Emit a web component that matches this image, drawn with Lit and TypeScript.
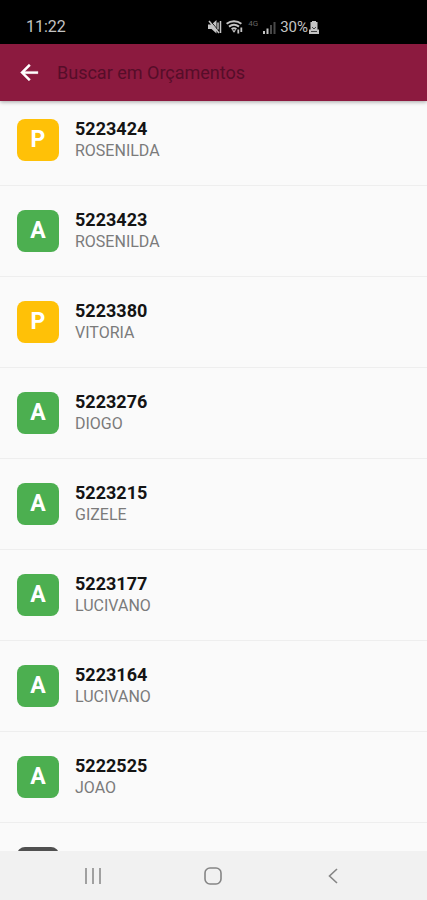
import { LitElement, html, css, nothing } from "lit";
import { customElement, property } from "lit/decorators.js";

type Quote = { status: string; number: string; client: string };

const QUOTES: Quote[] = [
  { status: "P", number: "5223424", client: "ROSENILDA" },
  { status: "A", number: "5223423", client: "ROSENILDA" },
  { status: "P", number: "5223380", client: "VITORIA" },
  { status: "A", number: "5223276", client: "DIOGO" },
  { status: "A", number: "5223215", client: "GIZELE" },
  { status: "A", number: "5223177", client: "LUCIVANO" },
  { status: "A", number: "5223164", client: "LUCIVANO" },
  { status: "A", number: "5222525", client: "JOAO" },
  { status: "", number: "", client: "" },
];

@customElement("status-bar")
export class StatusBar extends LitElement {
  static styles = css`
    :host {
      display: flex;
      align-items: flex-end;
      box-sizing: border-box;
      height: 44px;
      padding: 0 108px 7px 26px;
      background: #000;
      color: #c4c4c4;
      font-size: 15px;
      line-height: 20px;
    }
    .time {
      flex: 1;
      font-size: 16px;
    }
    .icons {
      display: flex;
      align-items: center;
      height: 20px;
    }
    .network {
      width: 11px;
      margin: 0 4px 6px 5px;
      color: #666;
      font-size: 8px;
      line-height: 8px;
    }
    .wifi {
      margin-left: 4px;
    }
    .level {
      margin: 0 1px 0 4px;
    }
    svg {
      display: block;
    }
  `;

  render() {
    return html`
      <span class="time">11:22</span>
      <div class="icons">
        <svg width="14" height="14" viewBox="0 0 14 14" fill="none" stroke="currentColor">
          <path d="M0 4.500h3.500l5-4.500v13.500l-5-4.500H0z" fill="currentColor" stroke="none" />
          <path d="M2.500 1l9 11" stroke="#000" stroke-width="1" />
          <path d="M1 1l10 12" stroke-width="1.500" />
          <path d="M10 2.500v7M12.500 1v12" stroke-width="1.500" />
        </svg>
        <svg class="wifi" width="17" height="14" viewBox="0 0 17 14" fill="none" stroke="currentColor">
          <path d="M.600 3.800C5 .4 11 .4 15.400 3.800M3 6.600c3.200-2.400 6.800-2.400 10 0M5.600 9.200c1.600-1.200 3.200-1.200 4.800 0" stroke-width="2" />
          <path d="M6 10.200h4l-2 2.600z" fill="currentColor" stroke="none" />
          <path d="M12.300 9.500V13.500M15.300 7.500V12" stroke-width="1.800" />
        </svg>
        <span class="network">4G</span>
        <svg width="13" height="13" viewBox="0 0 13 13">
          <path d="M0 10h2v3H0zM3.500 7.500h2V13h-2z" fill="currentColor" />
          <path d="M7 4h2v9H7zM10.500 1h2v12h-2z" fill="#494949" />
        </svg>
        <span class="level">30%</span>
        <svg width="10" height="13" viewBox="0 0 10 13" fill="currentColor">
          <path d="M3 0h4v1h1.500v7.500H10V13H0V8.500h1.500V1H3z" />
          <path d="M3 6l2 2 2-2M2 10.500h6" fill="none" stroke="#444" />
        </svg>
      </div>
    `;
  }
}

@customElement("search-header")
export class SearchHeader extends LitElement {
  static styles = css`
    :host {
      display: flex;
      align-items: center;
      position: relative;
      box-sizing: border-box;
      height: 57px;
      padding: 0 16px;
      background: #8c1a3f;
      box-shadow: 0 1px 4px rgba(0, 0, 0, 0.35);
    }
    .back {
      display: flex;
      padding: 0;
      border: 0;
      background: none;
      color: #fff;
    }
    .search {
      flex: 1;
      min-width: 0;
      margin-left: 14px;
      padding: 0;
      border: 0;
      outline: 0;
      background: none;
      color: #4f0c28;
      font: 18px/24px Roboto, sans-serif;
    }
    .search::placeholder {
      color: #560d29;
      opacity: 1;
    }
  `;

  render() {
    return html`
      <button class="back" aria-label="Voltar">
        <svg width="27" height="27" viewBox="0 0 24 24" fill="currentColor">
          <path d="M19.500 11H7.830l5.090-5.090L11.500 4.500l-7.500 7.500 7.500 7.500 1.410-1.410L7.830 13H19.500z" stroke="currentColor" stroke-width=".3" />
        </svg>
      </button>
      <input class="search" type="text" aria-label="Buscar em Orçamentos" placeholder="Buscar em Orçamentos" />
    `;
  }
}

@customElement("quote-row")
export class QuoteRow extends LitElement {
  static styles = css`
    :host {
      display: flex;
      gap: 16px;
      padding: 24px 17px 22px;
      border-bottom: 1px solid #eee;
    }
    .tile {
      flex: none;
      width: 42px;
      height: 42px;
      border-radius: 8px;
      background: #505050;
      color: #fff;
      font-size: 23px;
      font-weight: 700;
      line-height: 42px;
      text-align: center;
    }
    .P {
      background: #ffc107;
    }
    .A {
      background: #4caf50;
    }
    .number {
      color: #141414;
      font-size: 18px;
      font-weight: 700;
      line-height: 20px;
    }
    .client {
      color: #7b7b7b;
      font-size: 16px;
      line-height: 24px;
    }
  `;

  @property({ attribute: false }) quote!: Quote;

  render() {
    const { status, number, client } = this.quote;
    return html`
      <div class="tile ${status}">${status}</div>
      ${number
        ? html`<div>
            <div class="number">${number}</div>
            <div class="client">${client}</div>
          </div>`
        : nothing}
    `;
  }
}

@customElement("nav-bar")
export class NavBar extends LitElement {
  static styles = css`
    :host {
      display: flex;
      align-items: center;
      justify-content: space-between;
      box-sizing: border-box;
      height: 49px;
      padding: 0 19%;
      background: #f1f1f1;
    }
    .key {
      display: flex;
      padding: 0;
      border: 0;
      background: none;
      color: #858585;
    }
  `;

  render() {
    return html`
      <button class="key" aria-label="Recentes">
        <svg width="24" height="24" viewBox="0 0 24 24" fill="none" stroke="currentColor" stroke-width="1.500">
          <path d="M5 4v16M12 4v16M19 4v16" />
        </svg>
      </button>
      <button class="key" aria-label="Início">
        <svg width="24" height="24" viewBox="0 0 24 24" fill="none" stroke="currentColor" stroke-width="1.600">
          <rect x="3" y="4" width="16" height="16" rx="5" />
        </svg>
      </button>
      <button class="key" aria-label="Voltar">
        <svg width="24" height="24" viewBox="0 0 24 24" fill="none" stroke="currentColor" stroke-width="1.600">
          <path d="M15 5l-7.500 7 7.500 7" />
        </svg>
      </button>
    `;
  }
}

@customElement("app-root")
export class AppRoot extends LitElement {
  static styles = css`
    :host {
      display: flex;
      flex-direction: column;
      height: 100vh;
      background: #fafafa;
      font-family: Roboto, sans-serif;
    }
    status-bar,
    search-header,
    nav-bar {
      flex: none;
    }
    .list {
      flex: 1;
      min-height: 0;
      overflow-y: auto;
      scrollbar-width: none;
    }
    .list quote-row:first-child {
      padding-top: 18px;
    }
  `;

  render() {
    return html`
      <status-bar></status-bar>
      <search-header></search-header>
      <main class="list">${QUOTES.map((quote) => html`<quote-row .quote=${quote}></quote-row>`)}</main>
      <nav-bar></nav-bar>
    `;
  }
}
